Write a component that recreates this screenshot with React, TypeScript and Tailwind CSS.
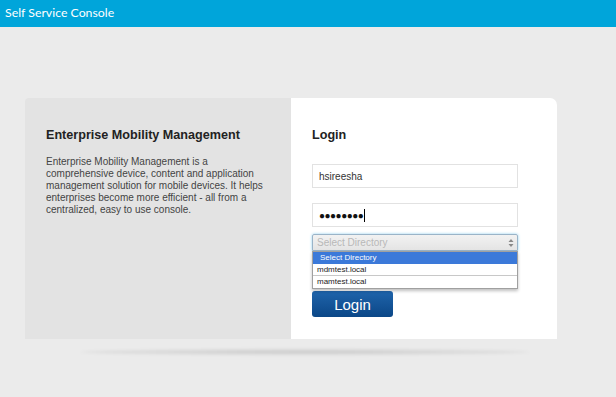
import React from "react";

export default function App() {
  return (
    <div className="w-[616px] h-[397px] bg-[#ebebeb] overflow-hidden relative" style={{ fontFamily: '"Liberation Sans", Arial, sans-serif' }}>
      <div className="h-[27px] bg-[#00a5da] flex items-center pl-[5px]">
        <span className="text-white text-[12.3px] leading-none" style={{ fontFamily: 'Lato, "Open Sans", sans-serif' }}>Self Service Console</span>
      </div>
      <div className="pt-[71px] pl-[25px]">
        <div className="flex w-[532px] h-[241px]">
          <div className="w-[266px] bg-[#e3e3e3] rounded-tl-[4px] pl-[21px] pt-[29px]">
            <h1 className="text-[12.6px] leading-[16px] font-bold text-[#222]">Enterprise Mobility Management</h1>
            <p className="mt-[13px] text-[10px] leading-[12px] text-[#444] whitespace-nowrap">
              Enterprise Mobility Management is a<br />
              comprehensive device, content and application<br />
              management solution for mobile devices. It helps<br />
              enterprises become more efficient - all from a<br />
              centralized, easy to use console.
            </p>
          </div>
          <div className="w-[266px] bg-white rounded-tr-[7px] pl-[21px] pt-[29px]">
            <h2 className="text-[12.6px] leading-[16px] font-bold text-[#222]">Login</h2>
            <div className="mt-[21px] w-[206px] h-[24px] border border-[#e2e2e2] flex items-center pl-[6px] text-[10px] text-[#333]">hsireesha</div>
            <div className="mt-[15px] w-[206px] h-[24px] border border-[#e2e2e2] flex items-center pl-[6px] text-[#111]">
              <span className="tracking-[-0.5px] text-[10px] font-bold">●●●●●●●●</span>
              <span className="ml-[1px] w-px h-[13px] bg-black"></span>
            </div>
            <div className="relative mt-[7px] w-[206px]">
              <div className="h-[17px] border border-[#9ab4c8] rounded-t-[2px] bg-gradient-to-b from-[#f2f2f2] to-[#e4e4e4] shadow-[0_0_3px_#8fd0ef] flex items-center pl-[4px] text-[10px] text-[#b8b8b8] relative">
                Select Directory
                <svg className="absolute right-[3px] top-[3px]" width="6" height="10" viewBox="0 0 6 10">
                  <path d="M0.5 4 L3 1 L5.5 4 Z" fill="#888" />
                  <path d="M0.5 6 L3 9 L5.5 6 Z" fill="#888" />
                </svg>
              </div>
              <div className="absolute left-0 top-[17px] w-[206px] bg-white border border-[#a0a0a0] shadow-[0_2px_3px_rgba(0,0,0,0.25)] text-[8px] leading-none">
                <div className="h-[12px] bg-[#3b79d9] text-white flex items-center pl-[7px]">Select Directory</div>
                <div className="h-[12px] border-b border-[#c8c8c8] text-[#222] flex items-center pl-[4px]">mdmtest.local</div>
                <div className="h-[12px] text-[#222] flex items-center pl-[4px]">mamtest.local</div>
              </div>
            </div>
            <button className="mt-[40px] w-[81px] h-[26px] rounded-[3px] bg-gradient-to-b from-[#1f64ab] to-[#0b4787] text-white text-[15px] leading-none flex items-center justify-center">Login</button>
          </div>
        </div>
      </div>
      <div className="absolute left-[80px] top-[349px] w-[450px] h-[6px] rounded-[50%] bg-[radial-gradient(ellipse_at_center,rgba(0,0,0,0.14)_0%,rgba(0,0,0,0.06)_60%,rgba(0,0,0,0)_100%)] blur-[1.5px]"></div>
    </div>
  );
}
